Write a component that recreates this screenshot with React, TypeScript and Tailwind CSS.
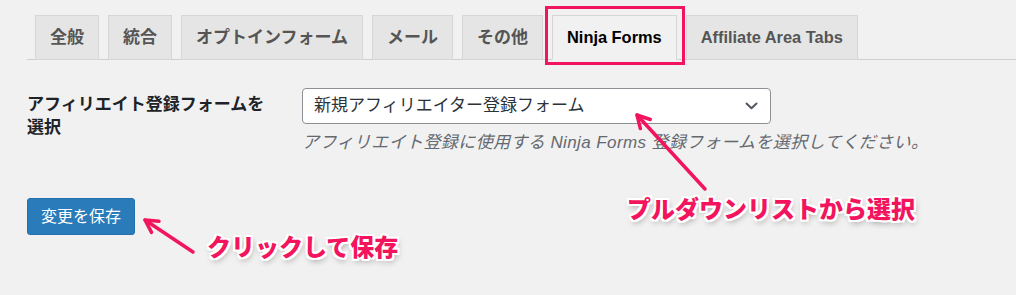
const tabs = ["全般", "統合", "オプトインフォーム", "メール", "その他", "Ninja Forms", "Affiliate Area Tabs"];
const activeTab = "Ninja Forms";

function Tab({ label }: { label: string }) {
  const active = label === activeTab;
  const latin = /^[A-Za-z ]+$/.test(label);
  return (
    <div
      className={`relative h-[45px] px-[14px] flex items-center font-bold border border-[#d6d6d6] -mb-px ${
        latin ? "text-[16.4px]" : "text-[17px]"
      } ${active ? "bg-[#f1f1f1] border-b-[#f1f1f1] text-black" : "bg-[#e5e5e5] text-[#555]"}`}
    >
      {label}
      {active && <span className="absolute -left-[8px] -right-[9px] -top-[10px] -bottom-[6px] border-[3px] border-[#f2155e]" />}
    </div>
  );
}

function Arrow({ x1, y1, x2, y2 }: { x1: number; y1: number; x2: number; y2: number }) {
  const a = Math.atan2(y2 - y1, x2 - x1);
  const len = 14;
  const spread = 0.5;
  const p1 = `${x2 - len * Math.cos(a - spread)},${y2 - len * Math.sin(a - spread)}`;
  const p2 = `${x2 - len * Math.cos(a + spread)},${y2 - len * Math.sin(a + spread)}`;
  return (
    <g stroke="#f2155e" strokeWidth="3.5" strokeLinecap="round" fill="none">
      <line x1={x1} y1={y1} x2={x2} y2={y2} />
      <polyline points={`${p1} ${x2},${y2} ${p2}`} strokeLinejoin="round" />
    </g>
  );
}

const note =
  "absolute text-[24px] font-black text-[#f2155e] leading-none [text-shadow:2px_0_0_#fff,-2px_0_0_#fff,0_2px_0_#fff,0_-2px_0_#fff,2px_2px_0_#fff,-2px_-2px_0_#fff,2px_-2px_0_#fff,-2px_2px_0_#fff,1px_3px_6px_rgba(0,0,0,0.4)]";

export default function App() {
  return (
    <div
      className="relative w-[1016px] h-[295px] bg-[#f1f1f1] overflow-hidden pl-[27px] pt-[15px]"
      style={{ fontFamily: '"Liberation Sans", "Noto Sans CJK JP", sans-serif' }}
    >
      {/* Tabs */}
      <div className="flex gap-[9px] pl-[8px] border-b border-[#cfcfcf]">
        {tabs.map((t) => (
          <Tab key={t} label={t} />
        ))}
      </div>

      {/* Form row */}
      <div className="flex mt-[28px]">
        <div className="w-[275px] pt-[5px] text-[17px] font-bold text-[#1d2327] leading-[23px]">
          アフィリエイト登録フォームを
          <br />
          選択
        </div>
        <div>
          <div className="w-[469px] h-[36px] bg-white border border-[#8c8f94] rounded-[4px] flex items-center justify-between pl-[11px] pr-[12px] text-[17px] text-[#2c3338]">
            <span>新規アフィリエイター登録フォーム</span>
            <svg width="13" height="8" viewBox="0 0 13 8" fill="none">
              <path d="M1.5 1.5L6.5 6.2L11.5 1.5" stroke="#50575e" strokeWidth="2" strokeLinecap="round" strokeLinejoin="round" />
            </svg>
          </div>
          <p className="mt-[8px] text-[17px] tracking-[0.4px] italic text-[#646970] leading-[22px]">
            アフィリエイト登録に使用する Ninja Forms 登録フォームを選択してください。
          </p>
        </div>
      </div>

      {/* Save */}
      <button className="mt-[44px] w-[108px] h-[37px] rounded-[3px] bg-[#2a7bba] border border-[#2471ad] text-white text-[16px]">
        変更を保存
      </button>

      {/* Annotations */}
      <svg className="absolute inset-0 pointer-events-none" width="1016" height="295">
        <Arrow x1={193} y1={252} x2={145} y2={220} />
        <Arrow x1={705} y1={189} x2={637} y2={115} />
      </svg>
      <span className={`${note} left-[207px] top-[236px]`}>クリックして保存</span>
      <span className={`${note} left-[627px] top-[198px]`}>プルダウンリストから選択</span>
    </div>
  );
}
